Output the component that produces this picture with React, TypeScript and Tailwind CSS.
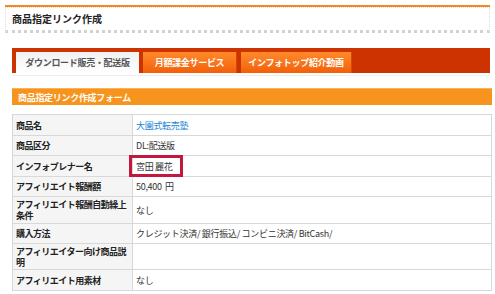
import React from 'react';

type Row = {
  label: string;
  value?: React.ReactNode;
  h: string;
};

const rows: Row[] = [
  {
    label: '商品名',
    value: <span className="text-[#1a86d6]">大園式転売塾</span>,
    h: 'h-[21px]',
  },
  { label: '商品区分', value: 'DL:配送版', h: 'h-[20px]' },
  {
    label: 'インフォプレナー名',
    value: (
      <span className="relative">
        宮田 麗花
        <span className="absolute -left-[7px] -top-[7px] h-[22px] w-[54px] border-[3px] border-[#c3173f]" />
      </span>
    ),
    h: 'h-[21px]',
  },
  { label: 'アフィリエイト報酬額', value: '50,400\u00a0\u00a0円', h: 'h-[20px]' },
  { label: 'アフィリエイト報酬自動繰上条件', value: 'なし', h: 'h-[27px]' },
  {
    label: '購入方法',
    value: 'クレジット決済/ 銀行振込/ コンビニ決済/ BitCash/',
    h: 'h-[20px]',
  },
  { label: 'アフィリエイター向け商品説明', value: '', h: 'h-[26px]' },
  { label: 'アフィリエイト用素材', value: 'なし', h: 'h-[21px]' },
];

const tabs = ['月額課金サービス', 'インフォトップ紹介動画'];

export default function App() {
  return (
    <div className="h-[294px] w-[495px] overflow-hidden bg-white font-['Noto_Sans_CJK_JP','Noto_Sans',sans-serif] text-[9px] leading-none tracking-[-0.3px] text-[#333]">
      {/* Page title */}
      <div className="mx-[5px] pt-[5px]">
        <div className="h-[2px] bg-[#f7861f]" />
        <div className="flex h-[26px] items-center border border-dotted border-[#dcdcdc] border-b-[3px] border-b-solid border-b-[#d2d2d2] pl-[6px] text-[10px] font-bold tracking-normal text-[#222]">
          商品指定リンク作成
        </div>
      </div>

      {/* Tab bar */}
      <div className="ml-[12px] mr-[5px] mt-[15px] flex h-[25px] items-end gap-[4px] bg-[#cc3300] pl-[4px]">
        <div className="flex h-[21px] w-[123px] items-center justify-center bg-gradient-to-b from-[#f2f2f2] to-white font-bold text-[#555]">
          ダウンロード販売・配送版
        </div>
        {tabs.map((t, i) => (
          <div
            key={t}
            className={`flex h-[21px] items-center justify-center border-r border-[#d94a00] bg-gradient-to-b from-[#ff8a2a] to-[#f25f06] font-bold text-white ${
              i === 0 ? 'w-[94px]' : 'w-[111px]'
            }`}
          >
            {t}
          </div>
        ))}
      </div>

      <div className="ml-[12px] mr-[5px] mt-[2px] h-px bg-[#f0f0f0]" />

      {/* Form header */}
      <div className="ml-[12px] mr-[3px] mt-[12px] flex h-[17px] items-center border-t border-[#f9b25a] bg-[#f7941d] pl-[6px] font-bold text-white">
        商品指定リンク作成フォーム
      </div>

      {/* Form table */}
      <div className="ml-[12px] mr-[3px] mt-[9px] border border-[#d8d8d8] border-b-0">
        {rows.map((r) => (
          <div
            key={r.label}
            className={`flex border-b border-[#d8d8d8] ${r.h}`}
          >
            <div className="flex w-[120px] shrink-0 items-center border-r border-[#d8d8d8] bg-[#f5f5f5] pl-[3px] font-bold leading-[11px] tracking-[-0.5px] text-[#222]">
              {r.label}
            </div>
            <div className="flex flex-1 items-center pl-[3px] text-[#333]">
              {r.value}
            </div>
          </div>
        ))}
      </div>
    </div>
  );
}
